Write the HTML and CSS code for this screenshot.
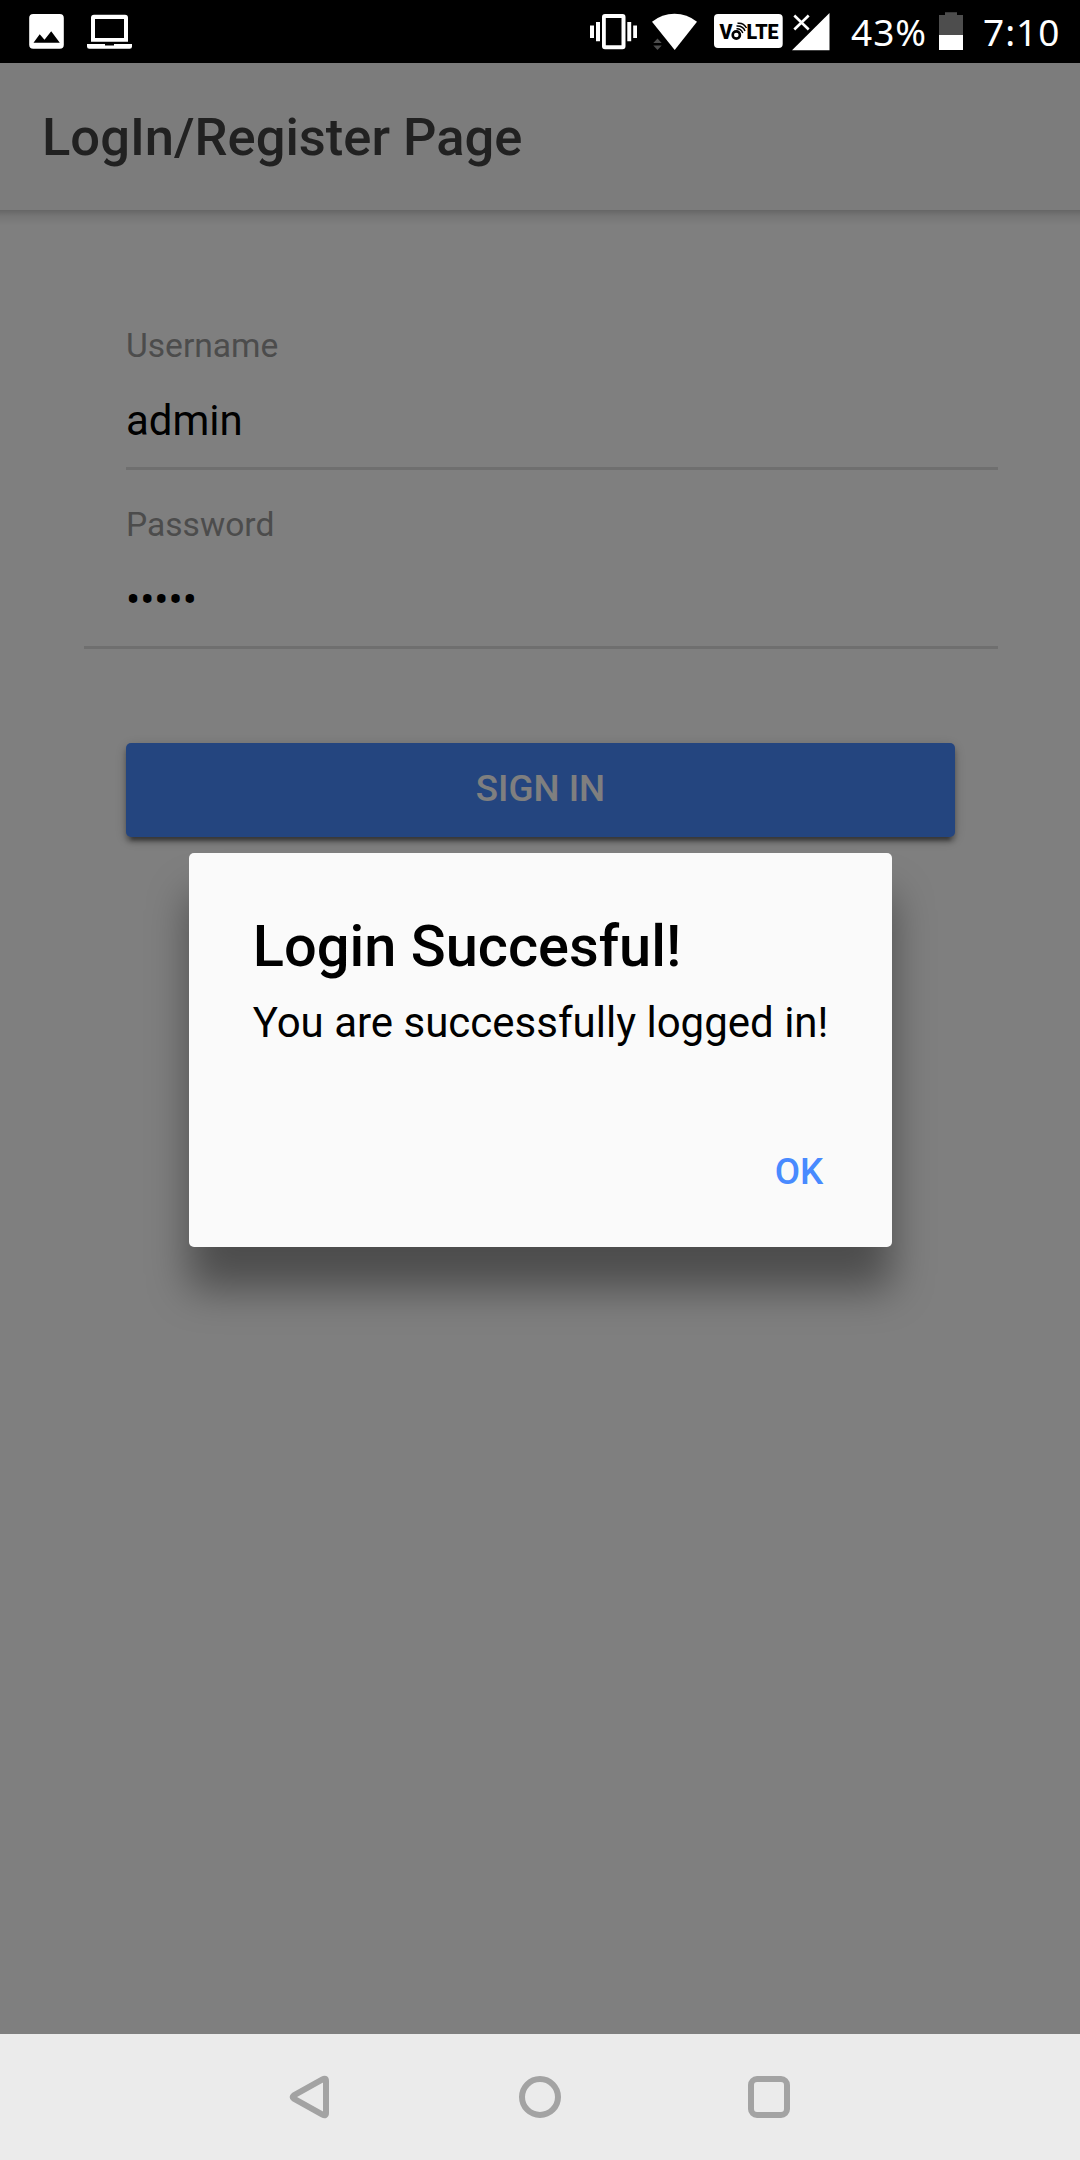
FILE: index.html
```html
<!DOCTYPE html>
<html lang="en">
<head>
<meta charset="utf-8">
<title>LogIn/Register Page</title>
<link rel="stylesheet" href="styles.css">
</head>
<body>
<div class="device">
  <div class="status-bar">
    <div class="status-group">
      <svg width="36" height="63" viewBox="29 0 36 63">
        <rect x="29.2" y="14" width="34.6" height="34.8" rx="4" fill="#fff"/>
        <path d="M33.5 42.8L39.7 34.2L44.5 39.8L51.2 31.3L59.8 42.8Z" fill="#000"/>
      </svg>
      <svg class="laptop" width="46" height="63" viewBox="87 0 46 63">
        <path fill="#fff" fill-rule="evenodd" d="M94 14.8H125a3 3 0 0 1 3 3V41.7H91V17.800a3 3 0 0 1 3-3ZM95 19V38H124V19Z"/>
        <path fill="#fff" d="M87 44H105V45.500H114V44H132V46.500a2.300 2.300 0 0 1-2.300 2.300H89.300a2.300 2.300 0 0 1-2.300-2.300Z"/>
      </svg>
    </div>
    <div class="status-group">
      <svg width="48" height="63" viewBox="590 0 48 63" fill="#fff">
        <path fill-rule="evenodd" d="M605 14H622.500a3 3 0 0 1 3 3V46.300a3 3 0 0 1-3 3H605a3 3 0 0 1-3-3V17a3 3 0 0 1 3-3ZM605.800 18V45.300H621.500V18Z"/>
        <path d="M590 25.500h4v12.500h-4ZM596 22h4v19.300h-4ZM627.300 22h3.900v19.300h-3.900ZM633.200 25.500h3.800v12.500h-3.800Z"/>
      </svg>
      <svg class="wifi" width="46" height="63" viewBox="652 0 46 63">
        <path fill="#fff" d="M652 21.800Q662 13.800 674.500 13.800Q687 13.800 697 21.800L674.700 50Z"/>
        <path stroke="#000" stroke-width="2" fill="#4d4d4d" paint-order="stroke" d="M653.300 43L657.500 38.500L661.700 43ZM653.300 45.500H661.700L657.500 50Z"/>
      </svg>
      <svg class="volte" width="69" height="63" viewBox="714 0 69 63">
        <rect x="714" y="14" width="68.700" height="34" rx="4" fill="#fff"/>
        <text class="volte-text" x="719.500" y="39" textLength="13" lengthAdjust="spacingAndGlyphs">V</text>
        <text class="volte-text" x="746.500" y="39" textLength="32" lengthAdjust="spacingAndGlyphs">LTE</text>
        <circle cx="736.300" cy="35" r="3.600" fill="none" stroke="#000" stroke-width="2.600"/>
        <path fill="none" stroke="#000" stroke-width="1.500" d="M736.500 28.800Q741 28.500 742.800 33M736.500 26Q743 25.500 745 31M737.500 23.300Q743.500 22.500 746.500 28"/>
      </svg>
      <svg class="signal" width="38" height="63" viewBox="792 0 38 63">
        <path fill="#fff" d="M829.500 13V50.300H792Z"/>
        <path stroke="#fff" stroke-width="2.600" d="M794.300 15.500L808.700 29.500M808.700 15.500L794.300 29.500"/>
      </svg>
      <span class="battery-level">43%</span>
      <svg class="battery" width="24" height="63" viewBox="939 0 24 63">
        <path fill="#4d4d4d" d="M945 12.300H957V15H963V35H939V15H945Z"/>
        <path fill="#fff" d="M939 35H963V50H939Z"/>
      </svg>
      <span class="clock">7:10</span>
    </div>
  </div>

  <div class="app">
    <header class="toolbar"><h1 class="toolbar-title">LogIn/Register Page</h1></header>
    <main class="content">
      <div class="list">
        <div class="item">
          <div class="item-inner">
            <div class="label">Username</div>
            <div class="value">admin</div>
          </div>
        </div>
        <div class="item item-last">
          <div class="item-inner">
            <div class="label">Password</div>
            <div class="value">•••••</div>
          </div>
        </div>
      </div>
      <button class="sign-in">SIGN IN</button>
    </main>
    <div class="backdrop">
      <div class="alert">
        <h2 class="alert-title">Login Succesful!</h2>
        <p class="alert-message">You are successfully logged in!</p>
        <div class="alert-actions"><button class="alert-ok">OK</button></div>
      </div>
    </div>
  </div>

  <nav class="nav-bar">
    <svg width="46" height="46" viewBox="287 2074 46 46"><path d="M293.800 2095.300Q291.500 2097 293.800 2098.700L322.500 2114.600Q326 2116.500 326 2113V2081Q326 2077.500 322.500 2079.400Z"/></svg>
    <svg width="46" height="46" viewBox="517 2074 46 46"><circle cx="540" cy="2097" r="18"/></svg>
    <svg width="46" height="46" viewBox="746 2074 46 46"><rect x="751" y="2079" width="36" height="36" rx="6"/></svg>
  </nav>
</div>
</body>
</html>
```
FILE: styles.css
```css
* { box-sizing: border-box; }

body {
  margin: 0;
  font-family: Roboto, sans-serif;
  color: #000;
}

h1, h2, p { margin: 0; font-weight: 400; }

button {
  border: 0;
  padding: 0;
  font-family: inherit;
}

svg { display: block; flex: none; }

.device {
  width: 1080px;
  height: 2160px;
  display: flex;
  flex-direction: column;
  overflow: hidden;
}

/* System status bar */
.status-bar {
  height: 63px;
  flex: none;
  display: flex;
  justify-content: space-between;
  padding: 0 19px 0 29px;
  background: #000;
  color: #fff;
  font: 37px/63px "Noto Sans", sans-serif;
}

.status-group { display: flex; }
.laptop { margin-left: 22px; }
.wifi { margin-left: 14px; }
.volte { margin-left: 16px; }
.signal { margin-left: 9px; }
.battery-level { width: 76px; margin-left: 21px; letter-spacing: 1px; white-space: nowrap; }
.battery { margin-left: 12px; }
.clock { width: 78px; margin-left: 20px; letter-spacing: 1px; white-space: nowrap; }

.volte-text {
  font: 900 20px Roboto, sans-serif;
  fill: #000;
}

/* App page */
.app {
  position: relative;
  flex: 1;
  display: flex;
  flex-direction: column;
  background: #fff;
}

.toolbar {
  height: 147px;
  flex: none;
  display: flex;
  align-items: center;
  padding: 1px 42px 0;
  background: #f8f8f8;
}

.toolbar-title {
  font-size: 52.5px;
  font-weight: 500;
  color: #424242;
}

.content {
  flex: 1;
  padding: 81px 82px 0 84px;
  background: linear-gradient(rgba(0, 0, 0, .2), rgba(0, 0, 0, .08) 6px, rgba(0, 0, 0, 0) 16px) no-repeat;
}

.item { height: 179px; padding-left: 42px; }
.item-inner { height: 179px; padding-top: 35px; border-bottom: 3px solid #dedede; }
.item-last { border-bottom: 3px solid #dedede; }
.item-last .item-inner { height: 176px; border-bottom: 0; }

.label {
  font-size: 33.6px;
  line-height: 40px;
  color: #999;
}

.value {
  margin-top: 30px;
  font-size: 42px;
  line-height: 50px;
}

.sign-in {
  display: block;
  width: 829px;
  height: 94px;
  margin: 94px 0 0 42px;
  padding-bottom: 2px;
  border-radius: 5px;
  background: #488aff;
  color: #fff;
  font-size: 36.75px;
  font-weight: 500;
  line-height: 92px;
  box-shadow: 0 5px 5px rgba(0, 0, 0, .28), 0 8px 3px -5px rgba(0, 0, 0, .3), 0 3px 13px rgba(0, 0, 0, .2);
}

/* Modal alert */
.backdrop {
  position: absolute;
  inset: 0;
  display: flex;
  align-items: center;
  justify-content: center;
  padding: 3px 0 0 1px;
  background: rgba(0, 0, 0, .5);
}

.alert {
  width: 703.5px;
  height: 394px;
  padding: 59px 62px 0 64px;
  border-radius: 5px;
  background: #fafafa;
  box-shadow: 0 42px 42px rgba(0, 0, 0, .4);
}

.alert-title {
  font-size: 57.75px;
  font-weight: 500;
  line-height: 68px;
}

.alert-message {
  margin-top: 18px;
  font-size: 42px;
  line-height: 50px;
  white-space: nowrap;
}

.alert-actions {
  display: flex;
  justify-content: flex-end;
  margin-top: 76px;
  padding-right: 7px;
}

.alert-ok {
  background: none;
  color: #488aff;
  font-size: 36.75px;
  font-weight: 500;
  line-height: 95px;
}

/* System navigation bar */
.nav-bar {
  height: 126px;
  flex: none;
  display: flex;
  align-items: center;
  justify-content: space-between;
  padding: 0 288px 0 287px;
  background: #ebebeb;
}

.nav-bar svg {
  fill: none;
  stroke: #a3a3a3;
  stroke-width: 6;
  stroke-linejoin: round;
}
```
